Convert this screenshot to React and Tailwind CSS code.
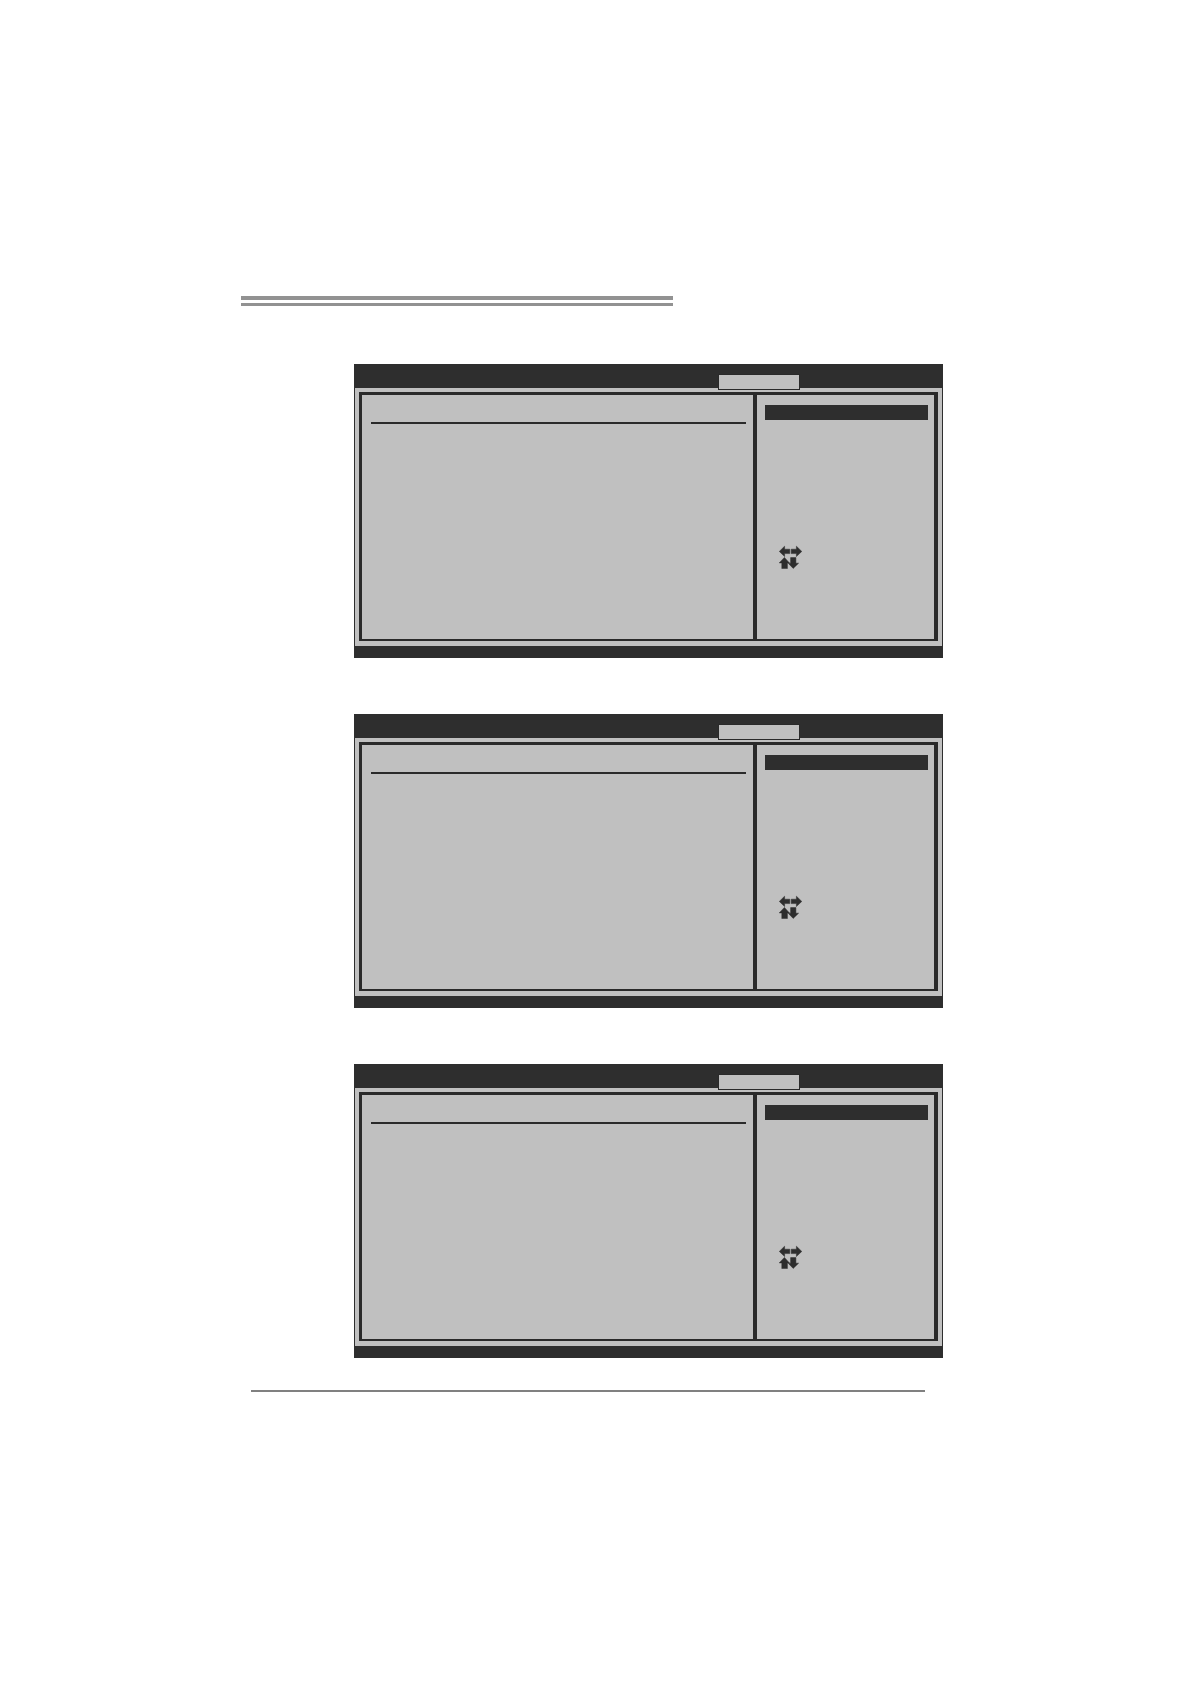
function NavigationArrows() {
  return (
    <svg
      className="block h-6 w-6 fill-[#2e2e2e] stroke-[#2e2e2e]"
      viewBox="0 0 24 24"
      strokeWidth="0.5"
      strokeLinejoin="round"
      aria-hidden="true"
    >
      <path d="M0.3 6.4 L5.6 1.2 V4.2 H10.8 V8.6 H5.6 V11.6 Z" />
      <path d="M22.8 6.4 L17.4 1.2 V4.2 H12.2 V8.6 H17.4 V11.6 Z" />
      <path d="M5.4 12.4 L10.4 17.9 H8.4 V23.6 H2.8 V17.9 H0.2 Z" />
      <path d="M14.2 23.4 L9.2 18.2 H11.6 V12.6 H16.9 V18.2 H19.6 Z" />
    </svg>
  );
}

function SetupScreen() {
  return (
    <section className="bg-[#2e2e2e]">
      <nav className="flex h-6 justify-end pt-2.5 pr-[143px]">
        <button
          type="button"
          aria-label="Active tab"
          className="z-10 h-4 w-[82px] border border-[#2a2a2a] bg-[#c0c0c0]"
        />
      </nav>
      <div className="mx-px bg-[#c0c0c0] px-1 pt-1 pb-[5px]">
        <div className="flex h-[249px] border-t-3 border-r-4 border-b-2 border-l-3 border-[#2a2a2a]">
          <div className="min-w-0 flex-1 pt-[27px] pr-[7px] pl-[9px]">
            <hr className="border-0 border-t-2 border-[#2a2a2a]" />
          </div>
          <aside className="flex w-[181px] flex-col border-l-4 border-[#2a2a2a] pt-2.5 pr-1.5 pl-2">
            <div className="h-[15px] bg-[#2e2e2e]" />
            <div className="mt-[125px] ml-3.5">
              <NavigationArrows />
            </div>
          </aside>
        </div>
      </div>
      <div className="h-3" />
    </section>
  );
}

export default function App() {
  return (
    <main className="min-h-screen bg-white pt-[296px] pr-[247px] pl-[241px]">
      <header className="h-2.5 max-w-[432px] border-t-4 border-b-3 border-[#929292]" />
      <div className="mt-[58px] ml-[113px] flex flex-col gap-14">
        <SetupScreen />
        <SetupScreen />
        <SetupScreen />
      </div>
      <footer className="mt-8 mr-[18px] ml-2.5 border-t-2 border-[#808080]" />
    </main>
  );
}
